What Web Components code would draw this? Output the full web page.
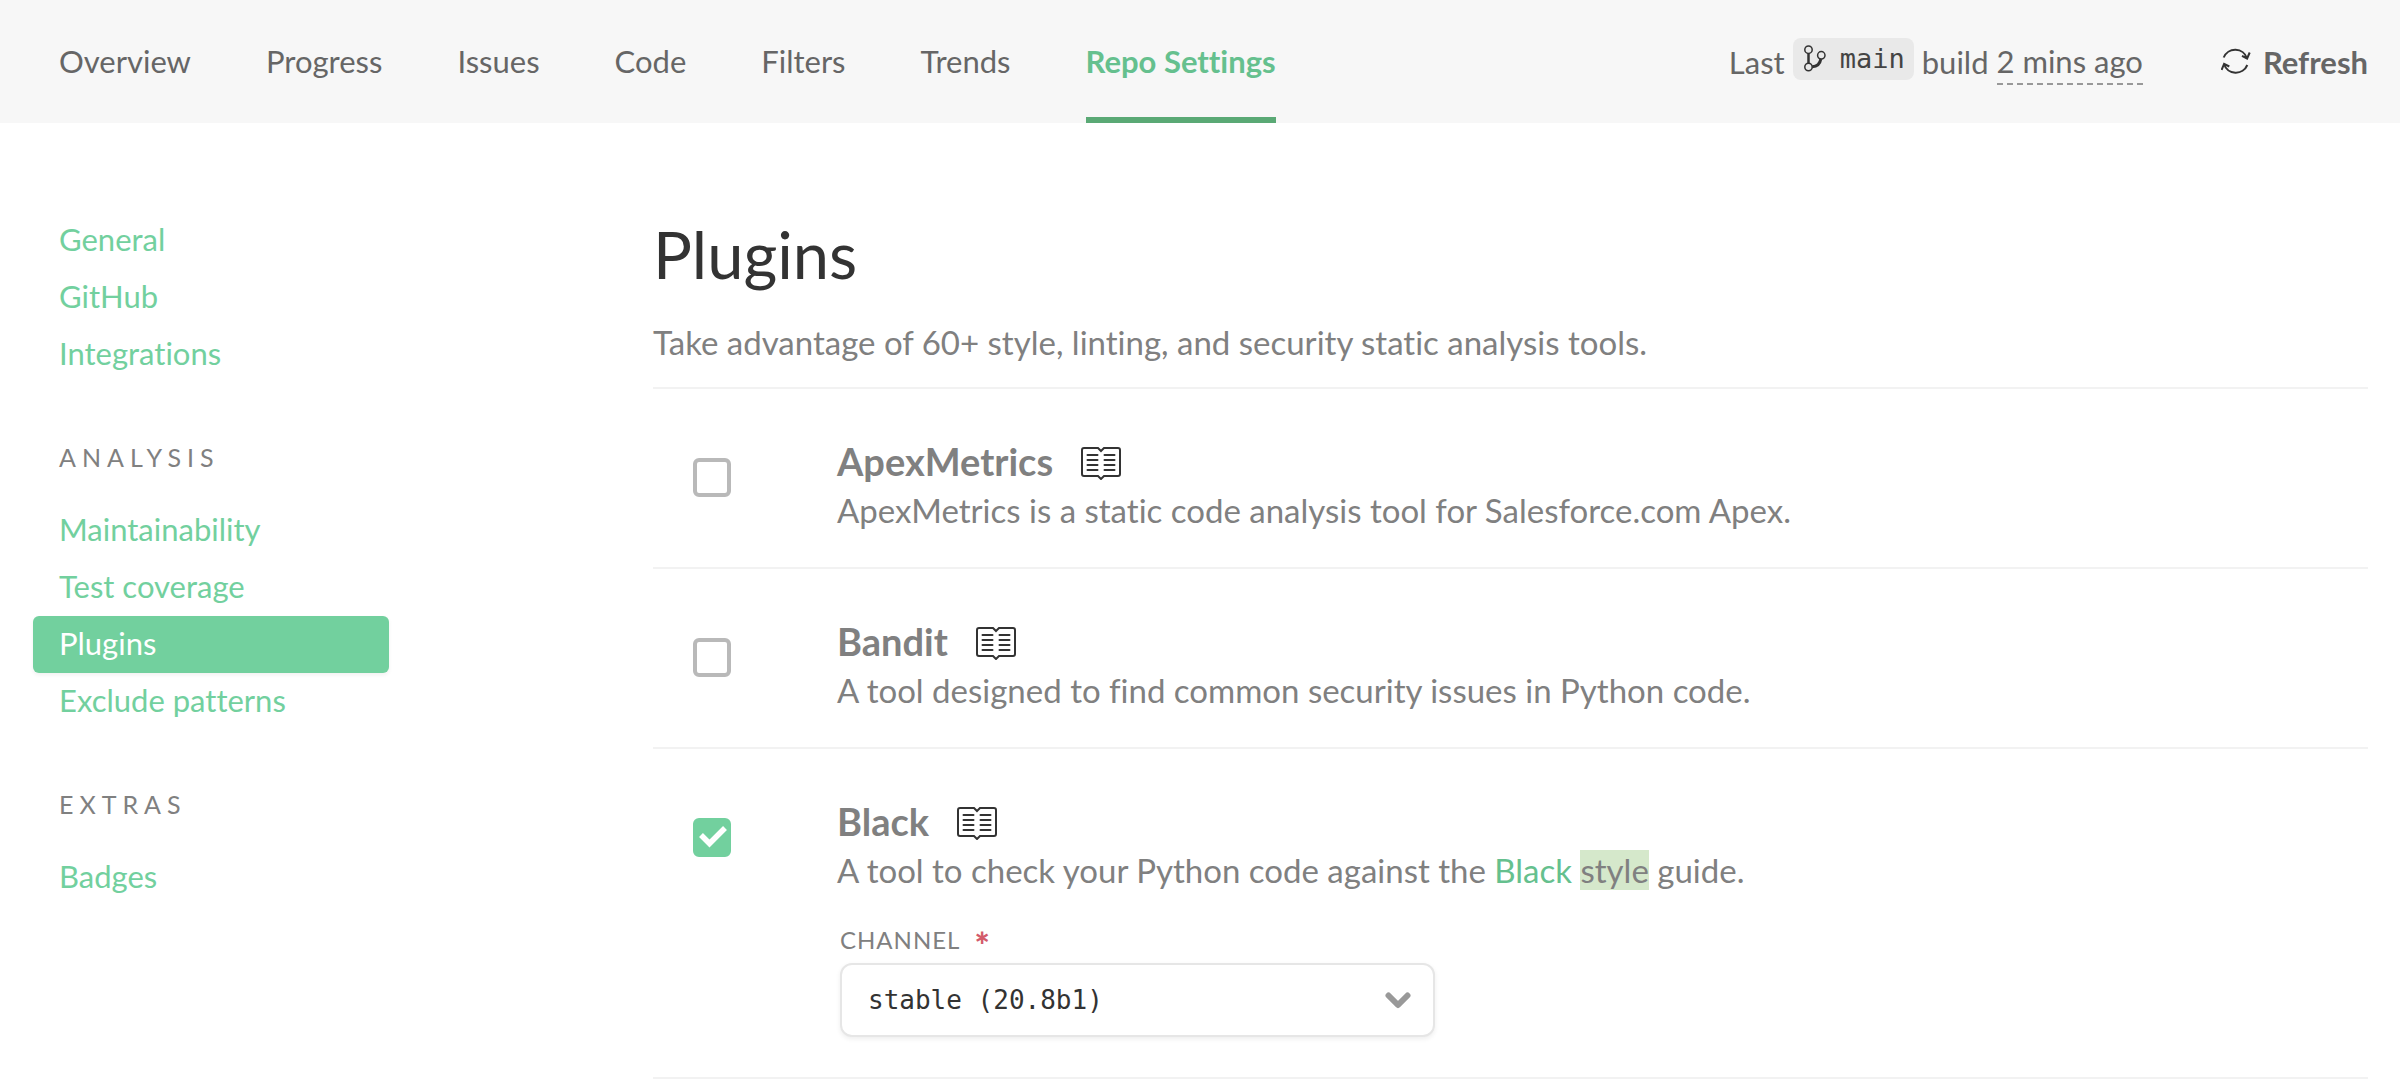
<!DOCTYPE html>
<html lang="en">
<head>
<meta charset="utf-8">
<title>Repo Settings – Plugins</title>
<style>
  body { margin: 0; background: #fff; color: #808080; font: 31px/36px Lato, "Open Sans", sans-serif; font-variant-ligatures: none; }
</style>
</head>
<body>
<settings-page></settings-page>
<script>
const define = (name, html, setup) => customElements.define(name, class extends HTMLElement {
  connectedCallback() {
    if (this.shadowRoot) return;
    const root = this.attachShadow({ mode: 'open' });
    const template = document.createElement('template');
    template.innerHTML = html;
    root.append(template.content.cloneNode(true));
    if (setup) setup(this, root);
  }
});

define('nav-tab', `
<style>
  :host { display: flex; }
  a { display: flex; align-items: center; box-sizing: border-box; padding-top: 4px; border-bottom: 6px solid transparent; color: #666; text-decoration: none; white-space: nowrap; }
  :host([active]) a { color: #65c08e; font-weight: 700; border-color: #5aa975; }
</style>
<a href="#"><slot></slot></a>`);

define('branch-badge', `
<style>
  :host { display: inline-flex; align-items: center; gap: 14px; height: 42px; box-sizing: border-box; padding: 0 9px 0 11px; border-radius: 8px; background: #e9e9e9; color: #444; font: 27px/36px "DejaVu Sans Mono", monospace; }
  svg { display: block; width: 22px; height: 27px; }
</style>
<svg viewBox="0 0 22 27" fill="none" stroke="#333">
  <circle cx="4.500" cy="4.700" r="3.700" stroke-width="1.500"/><circle cx="4.500" cy="22" r="3.700" stroke-width="1.500"/><circle cx="17.300" cy="10.300" r="3.700" stroke-width="1.500"/>
  <path d="M4.500 8.500v10" stroke-width="2.500"/><path d="M16.800 14c-.8 5-3.500 7.500-8.600 7.700" stroke-width="3"/>
</svg>
<slot></slot>`);

define('build-status', `
<style>
  :host { display: flex; align-items: center; gap: 78px; color: #666; white-space: nowrap; }
  p { display: flex; align-items: center; gap: 8px; margin: 0; }
  branch-badge { margin-bottom: 6px; }
  .when { display: block; padding: 5px 0 6px; background: repeating-linear-gradient(90deg, #999 0 6px, transparent 6px 10px) bottom / 100% 2px no-repeat; }
  button { display: flex; align-items: center; gap: 12px; padding: 0; border: 0; background: none; color: #666; font: inherit; font-weight: 700; }
  svg { display: block; width: 30px; height: 27px; }
</style>
<p><span>Last</span><branch-badge>main</branch-badge><span>build</span><time class="when">2 mins ago</time></p>
<button type="button">
  <svg viewBox="0 0 30 27" fill="none" stroke="#333" stroke-width="2">
    <path d="M2.700 9.500A12.400 12.400 0 0 1 26 10.300M21 7.800l5.100 2.700 2.600-6M26.300 17A12.400 12.400 0 0 1 3 16M.6 22l2.500-6.200 5.200 2.700"/>
  </svg>Refresh</button>`);

define('top-bar', `
<style>
  :host { display: block; }
  header { display: flex; justify-content: space-between; height: 123px; box-sizing: border-box; padding: 0 32px 0 59px; background: #f7f7f7; }
  nav { display: flex; gap: 75px; }
</style>
<header>
  <nav>
    <nav-tab>Overview</nav-tab><nav-tab>Progress</nav-tab><nav-tab>Issues</nav-tab><nav-tab>Code</nav-tab><nav-tab>Filters</nav-tab><nav-tab>Trends</nav-tab><nav-tab active>Repo Settings</nav-tab>
  </nav>
  <build-status></build-status>
</header>`);

define('side-link', `
<style>
  :host { display: block; }
  a { display: block; padding: 0 26px 2px; border-radius: 6px; color: #72d09e; text-decoration: none; line-height: 55px; white-space: nowrap; }
  :host([active]) a { background: #72d09e; color: #fff; box-shadow: 0 2px 4px #0000000f; }
</style>
<a href="#"><slot></slot></a>`);

define('side-group', `
<style>
  :host { display: block; }
  h2 { margin: 0 26px; padding: 56px 0 27px; font-size: 25px; line-height: 36px; font-weight: 400; letter-spacing: 6px; text-transform: uppercase; color: #808080; }
</style>
<slot></slot>`, (host, root) => {
  const label = host.getAttribute('label');
  if (!label) return;
  const title = document.createElement('h2');
  title.textContent = label;
  root.querySelector('slot').before(title);
});

define('side-nav', `
<style>
  :host { display: block; }
</style>
<nav>
  <side-group><side-link>General</side-link><side-link>GitHub</side-link><side-link>Integrations</side-link></side-group>
  <side-group label="Analysis"><side-link>Maintainability</side-link><side-link>Test coverage</side-link><side-link active>Plugins</side-link><side-link>Exclude patterns</side-link></side-group>
  <side-group label="Extras"><side-link>Badges</side-link></side-group>
</nav>`);

define('check-box', `
<style>
  :host { display: grid; width: 38px; height: 39px; }
  input, svg { grid-area: 1 / 1; }
  input { appearance: none; width: 38px; height: 39px; margin: 0; border: 4px solid #b9b9b9; border-radius: 6px; background: #fff; }
  input:checked { border-color: #72d09e; background: #72d09e; }
  svg { z-index: 1; width: 38px; height: 39px; pointer-events: none; visibility: hidden; }
  input:checked + svg { visibility: visible; }
</style>
<input type="checkbox">
<svg viewBox="0 0 38 39" fill="none" stroke="#fff" stroke-width="5.500"><path d="M8 17l8.500 8.500L32 10"/></svg>`, (host, root) => {
  const input = root.querySelector('input');
  input.checked = host.hasAttribute('checked');
});

define('book-icon', `
<style>
  :host { display: block; }
  svg { display: block; width: 40px; height: 33px; }
</style>
<svg viewBox="0 0 40 33" fill="none" stroke="#333" stroke-width="2">
  <path d="M20 4l3-3h14q2 0 2 2v24q0 2-2 2H23l-3 3-3-3H3q-2 0-2-2V3q0-2 2-2h14z"/>
  <path d="M6.500 8h10M6.500 13h10M6.500 18h10M6.500 23h10M23.500 8h10M23.500 13h10M23.500 18h10M23.500 23h10" stroke-linecap="round"/>
</svg>`);

define('select-field', `
<style>
  :host { display: block; width: 595px; max-width: 100%; }
  label { display: flex; gap: 14px; height: 30px; font-size: 24px; line-height: 30px; letter-spacing: 1px; text-transform: uppercase; color: #808080; }
  b { color: #d35b6b; font-size: 36px; line-height: 40px; font-weight: 900; }
  .box { display: grid; align-items: center; margin-top: 8px; }
  select, svg { grid-area: 1 / 1; }
  select { appearance: none; width: 100%; height: 74px; box-sizing: border-box; padding: 0 64px 0 26px; border: 2px solid #e6e6e6; border-radius: 12px; background: #fff; color: #333; font: 26px/32px "DejaVu Sans Mono", monospace; box-shadow: 0 2px 5px #00000012; }
  svg { justify-self: end; width: 26px; height: 17px; margin-right: 24px; pointer-events: none; }
</style>
<label for="field"><slot></slot><b>*</b></label>
<div class="box">
  <select id="field" required></select>
  <svg viewBox="0 0 26 17" fill="none" stroke="#999" stroke-width="6" stroke-linecap="round" stroke-linejoin="round"><path d="M3.500 3.500L13 13l9.500-9.500"/></svg>
</div>`, (host, root) => {
  root.querySelector('select').add(new Option(host.getAttribute('value')));
});

define('plugin-row', `
<style>
  :host { display: flex; gap: 106px; padding: 50px 0 39px 40px; border-bottom: 2px solid #f2f2f2; }
  check-box { margin-top: 19px; }
  .body { flex: 1; min-width: 0; }
  h3 { display: flex; align-items: center; gap: 28px; margin: 0; color: #808080; font-size: 38px; line-height: 44px; font-weight: 700; }
  book-icon { margin-top: 4px; }
  p { margin: 9px 0 0; font-size: 33px; line-height: 36px; }
  ::slotted(select-field) { margin: 37px 0 1px 3px; }
</style>
<check-box></check-box>
<div class="body">
  <h3><span></span><book-icon></book-icon></h3>
  <p><slot></slot></p>
  <slot name="options"></slot>
</div>`, (host, root) => {
  const box = root.querySelector('check-box').shadowRoot.querySelector('input');
  box.checked = host.hasAttribute('enabled');
  box.setAttribute('aria-label', host.getAttribute('name'));
  root.querySelector('h3 span').textContent = host.getAttribute('name');
});

define('plugin-list', `
<style>
  :host { display: block; }
  header { padding-bottom: 27px; border-bottom: 2px solid #f2f2f2; }
  h1 { margin: 0; color: #333; font-size: 65px; line-height: 72px; font-weight: 400; }
  p { margin: 34px 0 0; font-size: 33px; line-height: 36px; }
  a { color: #65c08e; text-decoration: none; }
  mark { background: #d5e8cb; color: inherit; }
</style>
<header>
  <h1>Plugins</h1>
  <p>Take advantage of 60+ style, linting, and security static analysis tools.</p>
</header>
<plugin-row name="ApexMetrics">ApexMetrics is a static code analysis tool for Salesforce.com Apex.</plugin-row>
<plugin-row name="Bandit">A tool designed to find common security issues in Python code.</plugin-row>
<plugin-row name="Black" enabled>A tool to check your Python code against the <a href="#">Black</a> <mark>style</mark> guide.<select-field slot="options" value="stable (20.8b1)">Channel</select-field></plugin-row>`);

define('settings-page', `
<style>
  :host { display: block; }
  .columns { display: flex; gap: 264px; padding: 89px 32px 0 33px; }
  side-nav { flex: 0 0 356px; }
  main { flex: 1; min-width: 0; padding-top: 6px; }
</style>
<top-bar></top-bar>
<div class="columns">
  <side-nav></side-nav>
  <main><plugin-list></plugin-list></main>
</div>`);
</script>
</body>
</html>
